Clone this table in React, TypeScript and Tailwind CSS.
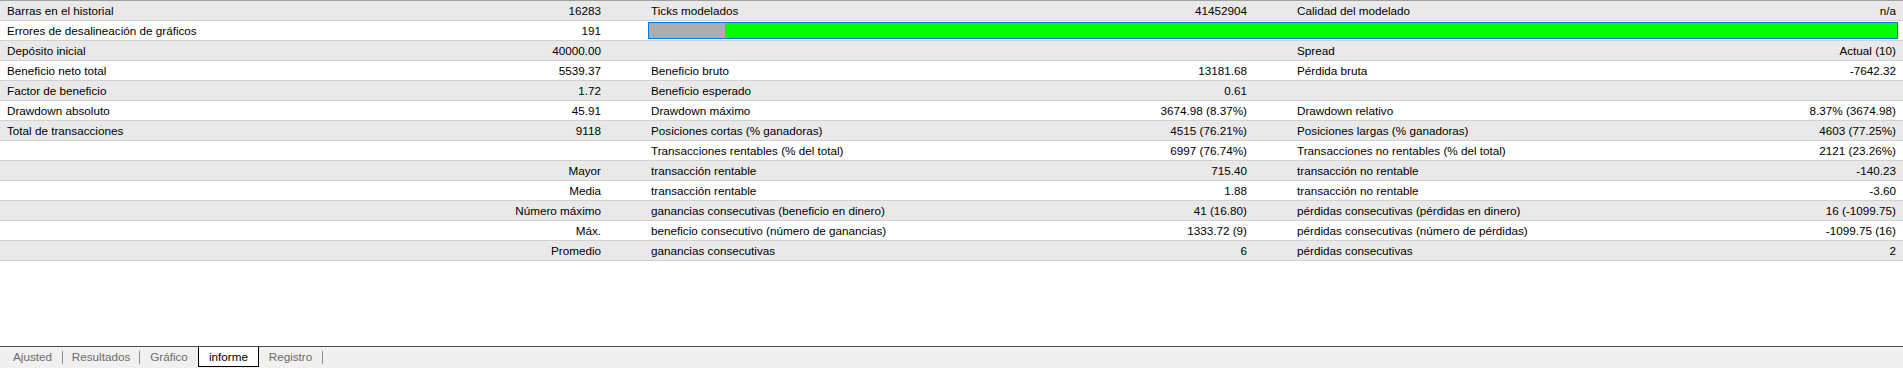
import React from 'react';

type Row = {
  l1?: string;
  v1?: string;
  l2?: string;
  v2?: string;
  l3?: string;
  v3?: string;
  right?: boolean;
  bar?: boolean;
};

const rows: Row[] = [
  { l1: 'Barras en el historial', v1: '16283', l2: 'Ticks modelados', v2: '41452904', l3: 'Calidad del modelado', v3: 'n/a' },
  { l1: 'Errores de desalineación de gráficos', v1: '191', bar: true },
  { l1: 'Depósito inicial', v1: '40000.00', l3: 'Spread', v3: 'Actual (10)' },
  { l1: 'Beneficio neto total', v1: '5539.37', l2: 'Beneficio bruto', v2: '13181.68', l3: 'Pérdida bruta', v3: '-7642.32' },
  { l1: 'Factor de beneficio', v1: '1.72', l2: 'Beneficio esperado', v2: '0.61' },
  { l1: 'Drawdown absoluto', v1: '45.91', l2: 'Drawdown máximo', v2: '3674.98 (8.37%)', l3: 'Drawdown relativo', v3: '8.37% (3674.98)' },
  { l1: 'Total de transacciones', v1: '9118', l2: 'Posiciones cortas (% ganadoras)', v2: '4515 (76.21%)', l3: 'Posiciones largas (% ganadoras)', v3: '4603 (77.25%)' },
  { l2: 'Transacciones rentables (% del total)', v2: '6997 (76.74%)', l3: 'Transacciones no rentables (% del total)', v3: '2121 (23.26%)' },
  { l1: 'Mayor', right: true, l2: 'transacción rentable', v2: '715.40', l3: 'transacción no rentable', v3: '-140.23' },
  { l1: 'Media', right: true, l2: 'transacción rentable', v2: '1.88', l3: 'transacción no rentable', v3: '-3.60' },
  { l1: 'Número máximo', right: true, l2: 'ganancias consecutivas (beneficio en dinero)', v2: '41 (16.80)', l3: 'pérdidas consecutivas (pérdidas en dinero)', v3: '16 (-1099.75)' },
  { l1: 'Máx.', right: true, l2: 'beneficio consecutivo (número de ganancias)', v2: '1333.72 (9)', l3: 'pérdidas consecutivas (número de pérdidas)', v3: '-1099.75 (16)' },
  { l1: 'Promedio', right: true, l2: 'ganancias consecutivas', v2: '6', l3: 'pérdidas consecutivas', v3: '2' },
];

function ReportRow({ row, index }: { row: Row; index: number }) {
  const bg = index % 2 === 0 ? 'bg-[#e9e9e9]' : 'bg-white';
  return (
    <div
      className={`grid grid-cols-[360px_247px_41px_352px_253px_41px_356px_253px] h-[20px] border-b border-[#d2d2d2] items-center whitespace-nowrap ${bg}`}
    >
      {row.right ? (
        <div className="col-span-2 text-right pr-[6px]">{row.l1}</div>
      ) : (
        <>
          <div className="pl-[7px]">{row.l1}</div>
          <div className="text-right pr-[6px]">{row.v1}</div>
        </>
      )}
      <div />
      {row.bar ? (
        <div className="col-span-5 mr-[5px] h-[17px] border border-[#0078d7] flex">
          <div className="w-[76px] bg-[#adadad]" />
          <div className="flex-1 bg-[#00ff00]" />
        </div>
      ) : (
        <>
          <div className="pl-[3px]">{row.l2}</div>
          <div className="text-right pr-[6px]">{row.v2}</div>
          <div />
          <div className="pl-[3px]">{row.l3}</div>
          <div className="text-right pr-[7px]">{row.v3}</div>
        </>
      )}
    </div>
  );
}

function Sep() {
  return <div className="w-px h-[13px] mt-[4px] bg-[#8c8c8c]" />;
}

export default function App() {
  return (
    <div
      className="w-[1903px] h-[368px] bg-white text-black text-[11.7px] flex flex-col overflow-hidden"
      style={{ fontFamily: '"Segoe UI", "Liberation Sans", sans-serif' }}
    >
      <div className="border-t border-[#a0a0a0]">
        {rows.map((r, i) => (
          <ReportRow key={i} row={r} index={i} />
        ))}
      </div>
      <div className="flex-1" />
      {/* tabs */}
      <div className="h-[22px] border-t border-[#4a4a4a] bg-[#f0f0f0] flex items-start pl-[3px] text-[#6b6b6b]">
        <div className="w-[59px] text-center leading-[20px]">Ajusted</div>
        <Sep />
        <div className="w-[76px] text-center leading-[20px]">Resultados</div>
        <Sep />
        <div className="w-[58px] text-center leading-[20px]">Gráfico</div>
        <div className="w-[61px] h-[20px] bg-white border-x border-b border-black text-black text-center leading-[19px]">
          informe
        </div>
        <div className="w-[63px] text-center leading-[20px]">Registro</div>
        <Sep />
      </div>
    </div>
  );
}
